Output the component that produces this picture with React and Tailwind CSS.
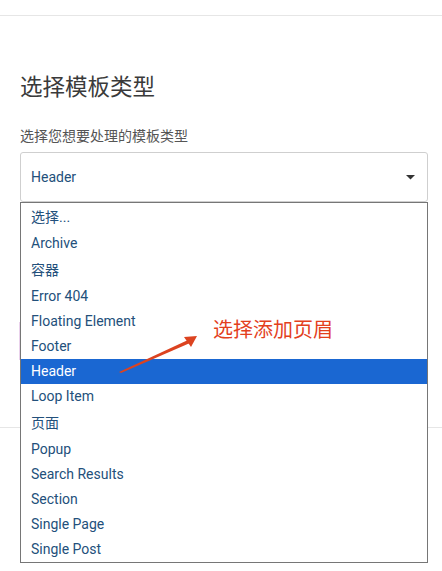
import React from 'react';

const FONT = "font-['Roboto','Noto_Sans_CJK_SC',sans-serif]";

const OPTIONS = [
  { label: '选择...', cjk: true },
  { label: 'Archive' },
  { label: '容器', cjk: true },
  { label: 'Error 404' },
  { label: 'Floating Element' },
  { label: 'Footer' },
  { label: 'Header', active: true },
  { label: 'Loop Item' },
  { label: '页面', cjk: true },
  { label: 'Popup' },
  { label: 'Search Results' },
  { label: 'Section' },
  { label: 'Single Page' },
  { label: 'Single Post' },
];

function Caret() {
  return (
    <svg width="9" height="5" viewBox="0 0 9 5" className="text-[#333]">
      <path d="M0 0 L9 0 L4.5 4.5 Z" fill="currentColor" />
    </svg>
  );
}

function Annotation() {
  return (
    <div className="absolute inset-0 z-20 pointer-events-none">
      <span className="absolute left-[213px] top-[316px] text-[20px] leading-[26px] text-[#e3401d] font-['Noto_Sans_CJK_SC',sans-serif]">
        选择添加页眉
      </span>
      <svg className="absolute left-0 top-0" width="442" height="571">
        {/* shaft, thin at the tail */}
        <polygon points="119,372 188,340 190,343 121,373" fill="#dc4320" />
        <polygon points="197,336 184,337 191,347" fill="#dc4320" />
      </svg>
    </div>
  );
}

export default function App() {
  return (
    <div className={`relative w-[442px] h-[571px] overflow-hidden bg-white ${FONT}`}>
      {/* top bar edge */}
      <div className="h-[16px] border-b border-[#e6e6e6]" />

      <div className="px-5 pt-[56px]">
        <h2 className="text-[22.5px] leading-[30px] text-[#3a3a3a] font-normal">选择模板类型</h2>
        <p className="mt-[24px] text-[14px] leading-[20px] text-[#555]">选择您想要处理的模板类型</p>

        <div className="relative mt-[6px] w-[408px]">
          <div className="h-[50px] border border-[#cfcfcf] rounded-[3px] flex items-center justify-between pl-[10px] pr-[12px]">
            <span className="text-[14px] text-[#23507b]">Header</span>
            <Caret />
          </div>

          {/* open options list */}
          <ul className="absolute left-0 top-full w-[408px] z-10 bg-white border border-[#767676]">
            {OPTIONS.map((o) => (
              <li
                key={o.label}
                className={`flex items-center pl-[10px] text-[14px] ${o.cjk ? 'h-[28px]' : 'h-[25px]'} ${
                  o.active ? 'bg-[#1a67d2] text-white' : 'text-[#23507b]'
                }`}
              >
                {o.label}
              </li>
            ))}
          </ul>
        </div>

        {/* content behind the list */}
        <div className="mt-[120px] -ml-px h-[38px] w-[200px] border-l border-[#ead2ec]" />
      </div>

      <div className="mt-[67px] border-t border-[#e6e6e6]" />

      <Annotation />
    </div>
  );
}
